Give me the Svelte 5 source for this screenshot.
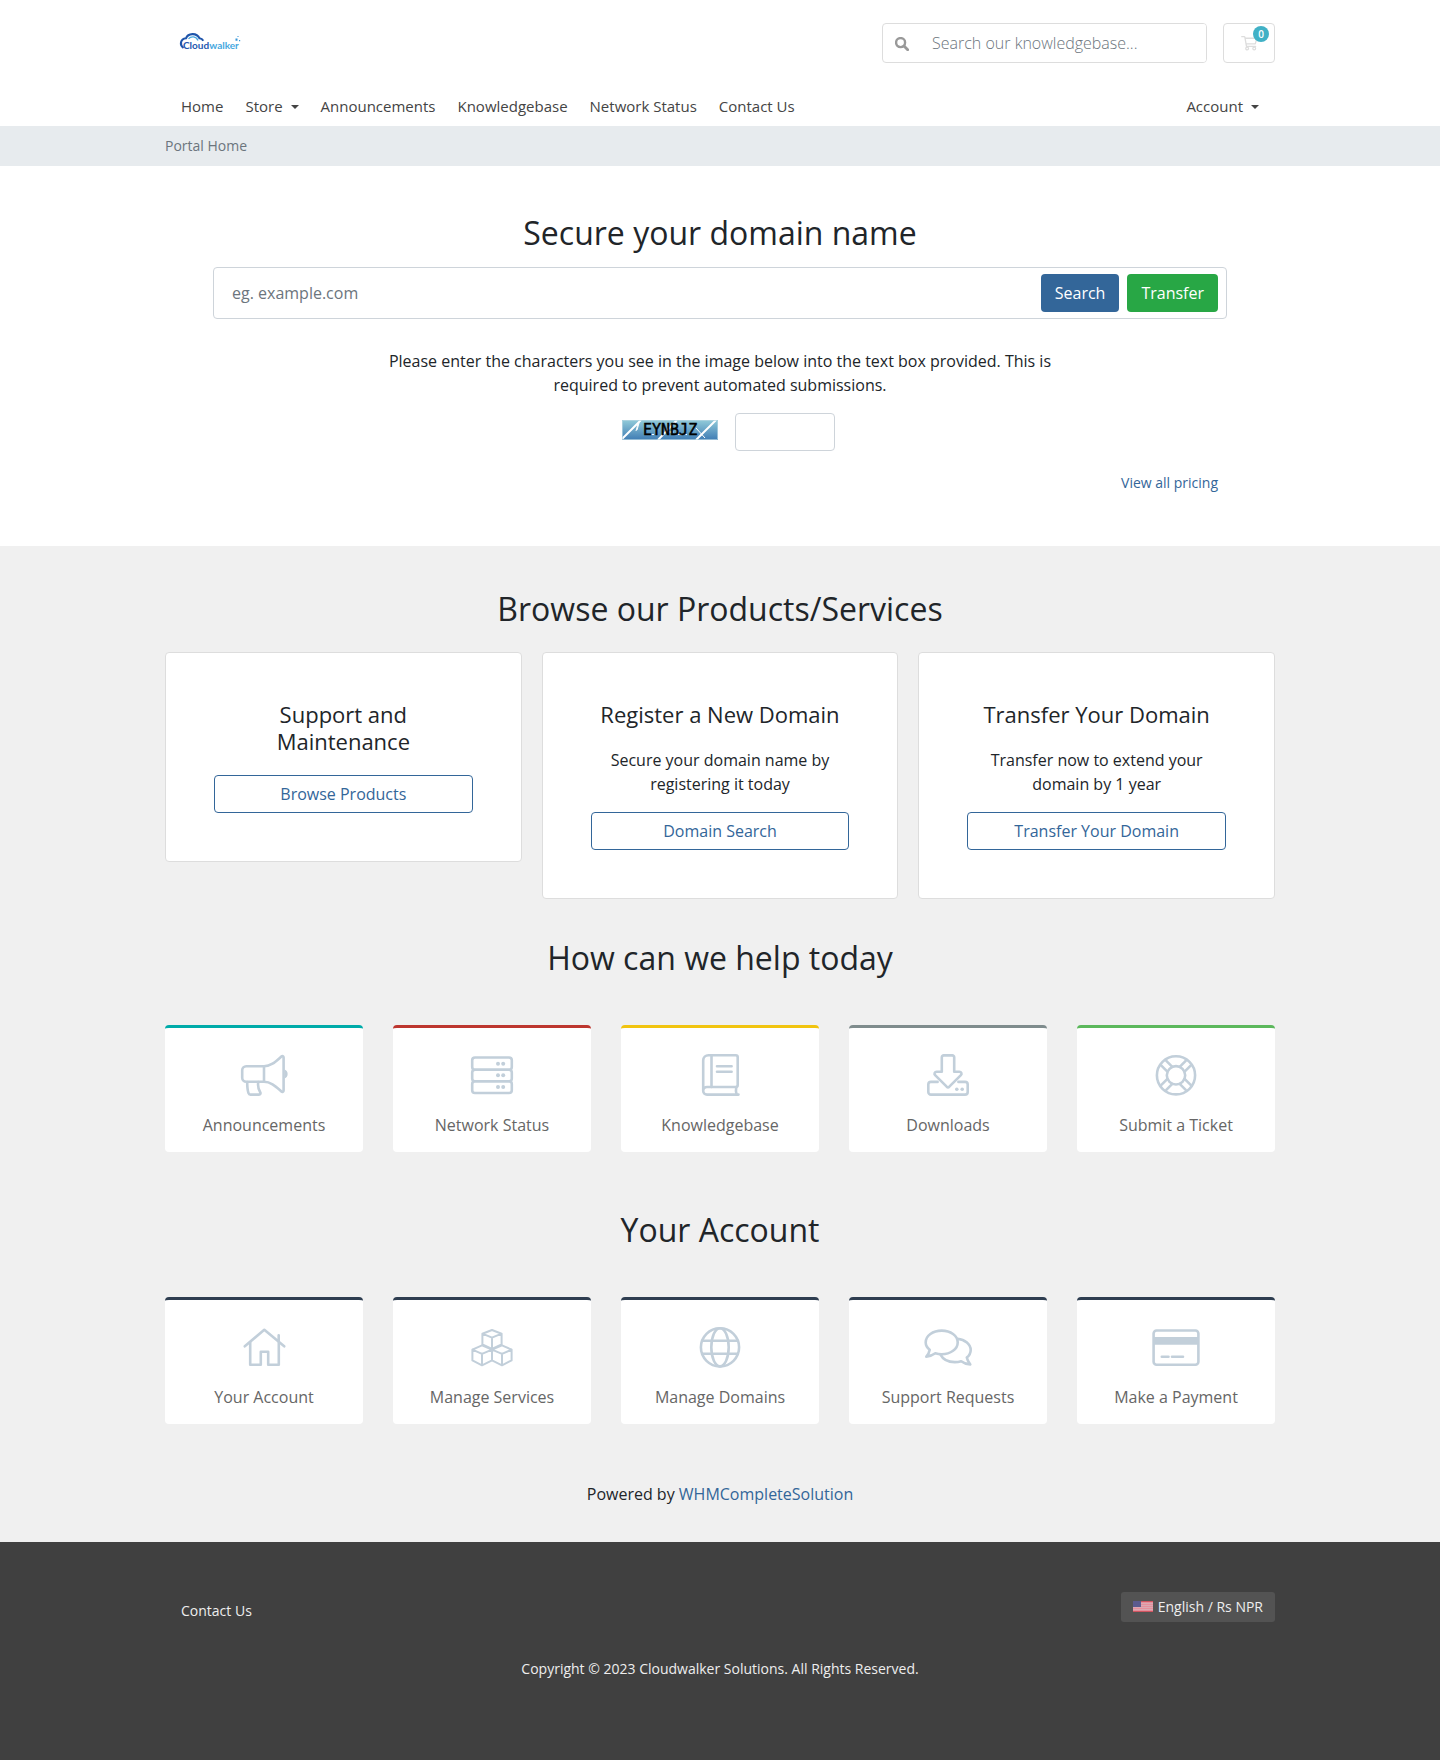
<script>
  const nav = [
    { label: 'Home' },
    { label: 'Store', menu: true },
    { label: 'Announcements' },
    { label: 'Knowledgebase' },
    { label: 'Network Status' },
    { label: 'Contact Us' }
  ];

  const products = [
    { title: 'Support and Maintenance', text: '', action: 'Browse Products' },
    { title: 'Register a New Domain', text: 'Secure your domain name by registering it today', action: 'Domain Search' },
    { title: 'Transfer Your Domain', text: 'Transfer now to extend your domain by 1 year', action: 'Transfer Your Domain' }
  ];

  const help = [
    { label: 'Announcements', icon: 'bullhorn', tone: 'teal' },
    { label: 'Network Status', icon: 'server', tone: 'red' },
    { label: 'Knowledgebase', icon: 'book', tone: 'yellow' },
    { label: 'Downloads', icon: 'download', tone: 'grey' },
    { label: 'Submit a Ticket', icon: 'ring', tone: 'lime' }
  ];

  const account = [
    { label: 'Your Account', icon: 'home', tone: 'navy' },
    { label: 'Manage Services', icon: 'cubes', tone: 'navy' },
    { label: 'Manage Domains', icon: 'globe', tone: 'navy' },
    { label: 'Support Requests', icon: 'chat', tone: 'navy' },
    { label: 'Make a Payment', icon: 'card', tone: 'navy' }
  ];

  let kbQuery = $state('');
  let domain = $state('');
  let captcha = $state('');
</script>

{#snippet tileIcon(name)}
  <svg class="tile-icon" viewBox="0 0 48 48" aria-hidden="true">
    {#if name === 'bullhorn'}
      <path d="M24 14.2H6.2a4 4 0 0 0-4 4v7.6a4 4 0 0 0 4 4H24z" />
      <path d="M24 14.2c7 0 11.500-4.500 17.400-9.700 1-.9 2.200-.3 2.200 1v33c0 1.300-1.200 1.900-2.200 1C35.500 34.300 31 29.800 24 29.800" />
      <path class="solid" d="M44.500 17.500c4.200 1.400 4.200 7.600 0 9z" />
      <path d="M7.200 30c0 5 .2 8 1.300 11.200.3.900 1 1.400 1.900 1.400H19c1.300 0 1.900-1.200 1.200-2.300-1.700-2.800-2.700-6-1.900-10.300" />
    {:else if name === 'server'}
      <rect x="4.200" y="5.500" width="39.600" height="12.200" rx="2.800" />
      <rect x="4.200" y="17.700" width="39.600" height="11.600" rx="2.800" />
      <rect x="4.200" y="29.300" width="39.600" height="11.700" rx="2.800" />
      <g class="solid">
        <circle cx="30" cy="11.700" r="2" /><circle cx="35.200" cy="11.700" r="2" />
        <circle cx="30" cy="23.200" r="2" /><circle cx="35.200" cy="23.200" r="2" />
        <circle cx="30" cy="35" r="2" /><circle cx="35.200" cy="35" r="2" />
      </g>
    {:else if name === 'book'}
      <path d="M7.200 38.700V8.500a5.300 5.300 0 0 1 5.300-5.300h27.300a1.900 1.900 0 0 1 1.900 1.900v28a1.900 1.900 0 0 1-1.900 1.900H11a3.800 3.800 0 0 0 0 7.600h31.500" />
      <path d="M15.500 3.200V35M40.300 35c-.6 2.800-.6 5 .3 7.600M21 14.200h14.600M21 19.800h14.600" />
    {:else if name === 'download'}
      <path d="M13.600 29.900H7a2.700 2.700 0 0 0-2.700 2.700v7.300A2.700 2.700 0 0 0 7 42.600h34a2.700 2.700 0 0 0 2.700-2.700v-7.300a2.700 2.700 0 0 0-2.700-2.700h-6.600" />
      <path d="M17.800 19.800V5.300a1.900 1.900 0 0 1 1.900-1.900h8.600a1.900 1.900 0 0 1 1.900 1.900v14.500h5.200c1.900 0 2.800 2.100 1.500 3.400L25.300 34.700a1.900 1.900 0 0 1-2.600 0L11.100 23.200c-1.300-1.300-.4-3.400 1.500-3.400z" />
      <g class="solid"><circle cx="32.800" cy="37.200" r="1.800" /><circle cx="38.200" cy="37.200" r="1.800" /></g>
    {:else if name === 'ring'}
      <circle cx="24" cy="23.300" r="19.100" />
      <circle cx="24" cy="23.300" r="9.200" />
      <path d="M15.400 19.700l-6-6M20.300 14.800l-6-6M27.700 14.800l6-6M32.600 19.700l6-6M15.400 26.900l-6 6M20.300 31.800l-6 6M27.700 31.800l6 6M32.600 26.900l6 6" />
    {:else if name === 'home'}
      <path d="M4.800 22.300L24.300 5.800 44.200 22.300M38.700 17.500V11.200" />
      <path d="M10.200 18.500v22.200h10.600V27.800h7.400v12.900h10.600V18.500" />
    {:else if name === 'cubes'}
      <g class="fine">
        <path d="M24 6l9.600 3.700v10.800L24 24.800l-9.600-4.300V9.700zM14.400 9.700L24 13.700l9.600-4M24 13.700v11" />
        <path d="M14 21.400l10 4.200v10.800l-10 4.900-9.600-4.900V25.600zM4.400 25.600l9.600 4.200 10-4.200M14 29.800v11.500" />
        <path d="M34 21.400l9.600 4.200v10.800L34 41.300l-10-4.900V25.600zM24 25.600l10 4.200 9.600-4.200M34 29.800v11.500" />
      </g>
    {:else if name === 'globe'}
      <circle cx="24" cy="23.300" r="19.100" />
      <ellipse cx="24" cy="23.300" rx="8.700" ry="19.100" />
      <path d="M6.500 16.800h35M6.500 29.700h35" />
    {:else if name === 'chat'}
      <path d="M17.700 6.600c8.900 0 16 5.200 16 11.800s-7.100 11.800-16 11.800c-2.300 0-4.400-.3-6.400-.9-2.700 2-5.600 3.200-9 3.300 1.800-2 3-4.400 3.400-6.900-2.600-2-4-4.600-4-7.300 0-6.600 7.100-11.800 16-11.800z" />
      <path d="M33.500 14.700c7.500.8 13.200 5.500 13.200 11.300 0 3-1.400 5.600-3.900 7.600.5 2.500 1.700 4.700 3.400 6.800-3.300-.1-6.400-1.200-9-3.200-2 .6-4.100.9-6.400.9-6.500 0-12-3-14.300-7.500" />
    {:else}
      <rect x="1.600" y="6.500" width="44.800" height="34.200" rx="3" />
      <path class="solid" d="M2 13h44v7.800H2z" />
      <path d="M9.800 32.700h6.700M20 32.700h11" />
    {/if}
  </svg>
{/snippet}

{#snippet tiles(items)}
  <div class="tiles">
    {#each items as item}
      <a class="tile {item.tone}" href="#top">
        {@render tileIcon(item.icon)}
        <span>{item.label}</span>
      </a>
    {/each}
  </div>
{/snippet}

<div class="page" id="top">
  <header>
    <div class="container">
      <div class="topbar">
        <a class="logo" href="#top" aria-label="Cloudwalker">
          <svg viewBox="0 0 62 20" aria-hidden="true">
            <path d="M4.500 16C.3 13 1.300 7 7 6.300 9 1.200 17.500.2 20.500 6.300c1.800.2 3 1 3.800 2.400" fill="none" stroke="#1f55ab" stroke-width="2.100" />
            <path d="M9.500 6.800c2.500-3 7.800-2.700 9.500 1.700" fill="none" stroke="#4aa9e0" stroke-width="1.300" />
            <text x="4" y="16.500" fill="#2458b0">Cloud<tspan fill="#46a8e0">walker</tspan></text>
            <path d="M56.500 6.500h2v2.200h-2zM58.500 4h1v1h-1zM60 8h1.200v1.200H60z" fill="#3796d8" />
          </svg>
        </a>
        <div class="tools">
          <form class="kb" role="search">
            <button type="button" aria-label="Search">
              <svg viewBox="0 0 14 14" aria-hidden="true">
                <circle cx="5.600" cy="5.600" r="4.500" fill="none" stroke="currentColor" stroke-width="2.400" />
                <path d="M9 9l3.700 3.700" stroke="currentColor" stroke-width="2.800" stroke-linecap="round" />
              </svg>
            </button>
            <input type="text" bind:value={kbQuery} placeholder="Search our knowledgebase..." aria-label="Search our knowledgebase" />
          </form>
          <a class="cart" href="#top" aria-label="Shopping cart">
            <svg viewBox="0 0 18 16" aria-hidden="true">
              <path d="M.8 1.300H3.300a.8.800 0 0 1 .8.600l1.700 9.600h9.700M4.300 3h12.500l-1.700 6H5.300" fill="none" stroke="currentColor" stroke-width="1.400" stroke-linecap="round" stroke-linejoin="round" />
              <circle cx="6.500" cy="13.800" r="1.500" fill="none" stroke="currentColor" stroke-width="1.300" />
              <circle cx="14" cy="13.800" r="1.500" fill="none" stroke="currentColor" stroke-width="1.300" />
            </svg>
            <span class="badge">0</span>
          </a>
        </div>
      </div>
      <nav aria-label="Main">
        {#each nav as item}
          <a href="#top" class:caret={item.menu}>{item.label}</a>
        {/each}
        <a href="#top" class="caret last">Account</a>
      </nav>
    </div>
  </header>

  <div class="crumbs"><div class="container">Portal Home</div></div>

  <section class="domain">
    <form class="container">
      <h2>Secure your domain name</h2>
      <div class="domain-box">
        <input type="text" bind:value={domain} placeholder="eg. example.com" aria-label="Domain name" />
        <button type="button" class="btn blue">Search</button>
        <button type="button" class="btn green">Transfer</button>
      </div>
      <p>Please enter the characters you see in the image below into the text box provided. This is required to prevent automated submissions.</p>
      <div class="captcha">
        <svg viewBox="0 0 96 20" role="img" aria-label="Captcha">
          <defs>
            <linearGradient id="sky" x1="0" y1="0" x2="0" y2="1">
              <stop offset="0" stop-color="#92cbd9" />
              <stop offset="1" stop-color="#3f7cb4" />
            </linearGradient>
          </defs>
          <rect width="96" height="20" fill="url(#sky)" />
          <path d="M0 19L19 0M36 20L55 0M74 20L94 0" stroke="#fff" stroke-width="2" />
          <path d="M14 11l2-7M17 3l-2 7M28 14.500h4M45 12h7M56 14.500h9M74 8l9 10M78 16l4-4" stroke="#fff" stroke-width="1" />
          <path d="M.5 19.500V.5h95v19z" fill="none" stroke="#b6d6e2" stroke-opacity=".7" />
          <text x="21" y="15">EYNBJZ</text>
        </svg>
        <input type="text" bind:value={captcha} aria-label="Captcha characters" />
      </div>
      <a class="pricing" href="#top">View all pricing</a>
    </form>
  </section>

  <main>
    <div class="container">
      <h2>Browse our Products/Services</h2>
      <div class="cards">
        {#each products as p}
          <article>
            <h3>{p.title}</h3>
            {#if p.text}<p>{p.text}</p>{/if}
            <a href="#top">{p.action}</a>
          </article>
        {/each}
      </div>

      <h2 class="group">How can we help today</h2>
      {@render tiles(help)}

      <h2 class="group far">Your Account</h2>
      {@render tiles(account)}

      <p class="powered">Powered by <a href="#top">WHMCompleteSolution</a></p>
    </div>
  </main>

  <footer>
    <div class="container">
      <div class="foot-row">
        <a href="#top">Contact Us</a>
        <button type="button">
          <svg viewBox="0 0 20 11" aria-hidden="true">
            <rect width="20" height="11" fill="#e58f9c" />
            <path d="M0 .5h20M0 10.500h20" stroke="#cf5560" />
            <path d="M0 2.500h20M0 4.500h20M0 6.500h20M0 8.500h20" stroke="#dba8b2" />
            <rect width="8" height="6" fill="#5b5b8e" />
          </svg>
          English / Rs NPR
        </button>
      </div>
      <p>Copyright © 2023 Cloudwalker Solutions. All Rights Reserved.</p>
    </div>
  </footer>
</div>

<style>
  :global(body) { background: #404040; }

  .page {
    font-family: "Open Sans", "Noto Sans", sans-serif;
    font-size: 16px;
    line-height: 24px;
    color: #212529;
    background: #fff;
  }
  .page :global(*) { box-sizing: border-box; }
  .container { max-width: 1140px; margin: 0 auto; padding: 0 15px; }
  a { color: #336699; text-decoration: none; }
  p { margin: 0; }
  input, button { font: inherit; }
  input { min-width: 0; color: #495057; outline: none; background: #fff; }
  input::placeholder { color: #6c757d; opacity: 1; }

  h2 { margin: 0; font-size: 32px; line-height: 38px; font-weight: 400; text-align: center; }

  header { padding: 23px 0 8px; }
  .topbar { display: flex; justify-content: space-between; }
  .logo { padding: 9px 0 0 14px; }
  .logo svg { display: block; width: 62px; height: 20px; }
  .logo text { font: 700 10px Lato, sans-serif; }
  .tools { display: flex; gap: 16px; }
  .kb {
    display: flex;
    width: 325px;
    height: 40px;
    border: 1px solid #ddd;
    border-radius: 4px;
    overflow: hidden;
  }
  .kb button { width: 37px; padding: 1px 0 0 12px; border: 0; background: none; color: #999; }
  .kb svg { display: block; width: 14px; height: 14px; }
  .kb input { flex: 1; padding: 0 12px; border: 0; font-weight: 300; }
  .cart {
    position: relative;
    display: flex;
    width: 52px;
    height: 40px;
    padding: 11px 17px;
    border: 1px solid #ddd;
    border-radius: 4px;
    color: #ddd;
  }
  .cart svg { flex: none; width: 17px; height: 16px; }
  .badge {
    position: absolute;
    top: 2px;
    right: 5px;
    width: 16px;
    height: 16px;
    border-radius: 50%;
    background: #41b1c6;
    color: #fff;
    font-size: 10px;
    line-height: 16px;
    font-weight: 600;
    text-align: center;
  }
  nav { display: flex; gap: 22px; margin-top: 32px; padding: 0 16px; font-size: 15px; line-height: 23px; }
  nav a { color: #444; }
  .last { margin-left: auto; }
  .caret::after {
    content: "";
    display: inline-block;
    margin-left: 8px;
    border: 4px solid transparent;
    border-top-color: currentColor;
    border-bottom: 0;
    vertical-align: 3px;
  }

  .crumbs { padding: 10px 0; background: #e7ebee; color: #6c757d; font-size: 14px; line-height: 20px; }

  .domain { padding: 48px 0 53px; text-align: center; }
  .domain-box {
    display: flex;
    gap: 8px;
    margin: 15px 48px 30px;
    padding: 6px 8px;
    border: 1px solid #ced4da;
    border-radius: 4px;
  }
  .domain-box input { flex: 1; padding: 0 10px; border: 0; }
  .btn { height: 38px; padding: 0 14px; border: 0; border-radius: 4px; color: #fff; }
  .blue { background: #336699; }
  .green { background: #28a745; }
  .domain p { max-width: 690px; margin: 0 auto 16px; }
  .captcha { display: flex; justify-content: center; gap: 17px; padding-left: 17px; }
  .captcha svg { width: 96px; height: 20px; margin-top: 7px; }
  .captcha text { font: 400 15px "DejaVu Sans Mono", monospace; fill: #000; stroke: #000; stroke-width: 0.5; }
  .captcha input { width: 100px; height: 38px; border: 1px solid #ced4da; border-radius: 4px; padding: 0 12px; }
  .pricing { display: block; margin: 21px 57px 0; font-size: 14px; line-height: 21px; text-align: right; }

  main { padding: 44px 0 36px; background: #f0f0f0; }
  .cards { display: grid; grid-template-columns: repeat(3, 1fr); align-items: start; gap: 20px; margin-top: 24px; }
  article { padding: 48px; border: 1px solid #ddd; border-radius: 4px; background: #fff; text-align: center; }
  h3 { margin: 0 0 20px; font-size: 22px; line-height: 27px; font-weight: 400; }
  article p { margin-bottom: 16px; }
  article a { display: block; padding: 6px 12px; border: 1px solid #336699; border-radius: 4px; }

  .group { margin: 40px 0 48px; }
  .far { margin-top: 59px; }
  .tiles { display: grid; grid-template-columns: repeat(5, 1fr); gap: 30px; }
  .tile {
    display: flex;
    flex-direction: column;
    align-items: center;
    gap: 13px;
    padding: 24px 0 15px;
    border-top: 3px solid;
    border-radius: 4px;
    background: #fff;
  }
  .tile span { color: #666; }
  .tile-icon { width: 48px; height: 48px; fill: none; stroke: #c2cfda; stroke-width: 2.6; stroke-linecap: round; stroke-linejoin: round; }
  .solid { fill: #c2cfda; stroke: none; }
  .fine { stroke-width: 2; }
  .teal { border-color: #00aba9; }
  .red { border-color: #bd362f; }
  .yellow { border-color: #f1c40f; }
  .grey { border-color: #7f8c8d; }
  .lime { border-color: #5cb85c; }
  .navy { border-color: #2e3d50; }
  .powered { margin-top: 58px; text-align: center; }

  footer { padding: 50px 0 80px; background: #404040; color: #eee; font-size: 14px; line-height: 21px; }
  .foot-row { display: flex; justify-content: space-between; align-items: flex-start; }
  .foot-row a { padding: 8px 16px; color: #eee; }
  .foot-row button {
    display: flex;
    align-items: center;
    gap: 5px;
    height: 30px;
    padding: 0 12px 1px;
    border: 0;
    border-radius: 3px;
    background: #535353;
    color: #eee;
  }
  .foot-row svg { width: 20px; height: 11px; }
  footer p { margin-top: 29px; text-align: center; }
</style>
